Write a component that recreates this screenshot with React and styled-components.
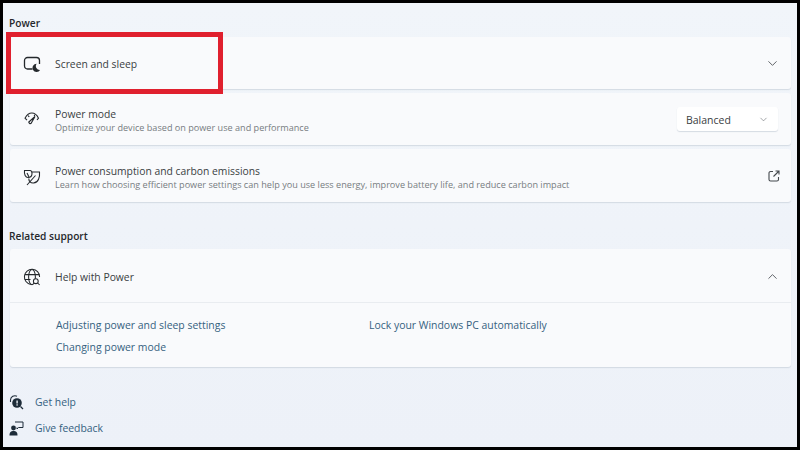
import React from 'react'
import styled, { createGlobalStyle } from 'styled-components'
import { ChevronDown, ChevronUp } from 'lucide-react'

const Global = createGlobalStyle`
    html, body {
        margin: 0;
        padding: 0;
        background: #000;
    }
    * {
        box-sizing: border-box;
    }
`

const Page = styled.div`
    position: relative;
    width: 800px;
    height: 450px;
    overflow: hidden;
    border: 3px solid #000;
    padding: 0 6px 0 7px;
    background: linear-gradient(180deg, #f1f5fa 0%, #edf1f8 100%);
    font-family: "Open Sans", "Noto Sans", sans-serif;
    color: #2b2f33;
`

const SectionTitle = styled.div`
    height: 15px;
    line-height: 15px;
    font-size: 10.2px;
    font-weight: 600;
    color: #25282c;
    margin-left: -1px;
    margin-top: ${props => props.top}px;
    margin-bottom: ${props => props.bottom}px;
`

const Stack = styled.div`
    display: flex;
    flex-direction: column;
    gap: 4px;
`

const Card = styled.div`
    background: #f9fafc;
    border-radius: 3px;
    box-shadow: 0 1px 1px rgba(190, 198, 210, 0.55);
`

const Row = styled(Card)`
    display: flex;
    align-items: center;
    height: ${props => props.h || 52}px;
    padding: 0 11px 0 12px;
`

const IconBox = styled.div`
    width: 20px;
    height: 20px;
    flex: none;
    margin: 2px 13px 0 0;
    display: flex;
    align-items: center;
    justify-content: center;
    color: #24282c;
`

const Body = styled.div`
    flex: 1;
    min-width: 0;
    padding-top: ${props => props.top}px;
`

const Title = styled.div`
    font-size: 10.35px;
    line-height: 13px;
    color: #3a3e42;
`

const Sub = styled.div`
    font-size: 9.12px;
    line-height: 13px;
    color: #777c81;
`

const Trailing = styled.div`
    display: flex;
    align-items: center;
    padding-top: 1px;
    color: #4a4e53;
`

const Select = styled.div`
    width: 101px;
    height: 24px;
    margin-right: 2px;
    padding: 1px 9px 0;
    display: flex;
    align-items: center;
    justify-content: space-between;
    background: #fff;
    border-radius: 3px;
    box-shadow: 0 1px 1px rgba(190, 198, 210, 0.6);
    font-size: 10.5px;
    color: #3a3e42;
`

const Panel = styled(Card)`
    height: 118px;
`

const PanelHead = styled.div`
    display: flex;
    align-items: center;
    height: 54px;
    padding: 0 11px 0 12px;
    border-bottom: 1px solid #e9ecf0;
`

const LinkGrid = styled.div`
    display: grid;
    grid-template-columns: 313px 1fr;
    row-gap: 9px;
    padding: 16px 0 0 46px;
`

const SupportLink = styled.div`
    font-size: 10.45px;
    line-height: 13px;
    color: #35617f;
`

const Footer = styled.div`
    display: flex;
    flex-direction: column;
    gap: 10px;
    margin-top: 27px;
`

const FooterItem = styled.div`
    display: flex;
    align-items: center;
    gap: 11px;
    height: 16px;
    margin-left: -1px;
    font-size: 10.4px;
    color: #35617f;
`

const FooterIcon = styled.div`
    width: 15px;
    height: 16px;
    display: flex;
    align-items: center;
    justify-content: center;
`

const Highlight = styled.div`
    position: absolute;
    left: 3px;
    top: 29px;
    width: 217px;
    height: 62px;
    border: 5px solid #e0202e;
`

const ScreenIcon = () => (
    <svg width="18" height="18" viewBox="0 0 18 18" fill="none" stroke="currentColor" strokeWidth="1.3">
        <path d="M9.5 14H4.5A3 3 0 0 1 1.5 11V5.5A3 3 0 0 1 4.5 2.5H13.5A3 3 0 0 1 16.5 5.5V9" />
        <path d="M13.6 8.8a4.1 4.1 0 1 0 3.5 6.3a4 4 0 0 1 -3.5 -6.3z" fill="currentColor" stroke="none" />
    </svg>
)

const GaugeIcon = () => (
    <svg width="18" height="18" viewBox="0 0 18 18" fill="none" stroke="currentColor" strokeWidth="1.1">
        <path d="M4 9.2L2 7.2C4 3.5 6.5 2 8.8 2S13.8 3.5 15.5 7.2L14 9" />
        <path d="M5.2 4.6L6.2 6M11.8 3.8L11.2 5" />
        <path d="M12 5.5L8.2 12.2A1.5 1.5 0 0 1 5.8 11z" strokeWidth="1.2" />
    </svg>
)

const LeafIcon = () => (
    <svg width="18" height="18" viewBox="0 0 18 18" fill="none" stroke="currentColor" strokeWidth="1.1">
        <path d="M1.5 2.5H7C8.5 2.5 9 4 9 5.5C9 8 7.5 9.5 5 9.5C2.5 9.5 1 6.5 1.5 2.5z" />
        <path d="M9 4H16.5C17 9 15.5 14.5 10.5 15C7.5 15.2 5.8 13.5 5.8 10.5" />
        <path d="M4 17L12.5 7.5M4 5L6 9" />
    </svg>
)

const GlobeIcon = () => (
    <svg width="18" height="18" viewBox="0 0 18 18" fill="none" stroke="currentColor" strokeWidth="1.05">
        <path d="M7.8 16.4A7.6 7.6 0 1 1 16.6 9" />
        <ellipse cx="9" cy="9" rx="3.4" ry="7.6" />
        <path d="M1.8 6.6H16.2M1.8 11.4H7.5" />
        <circle cx="12.8" cy="13.2" r="2.4" fill="#f9fafc" />
        <path d="M14.6 15L16.6 17" />
    </svg>
)

const ExternalIcon = () => (
    <svg width="12" height="12" viewBox="0 0 12 12" fill="none" stroke="#44484d" strokeWidth="1.1">
        <path d="M5 1.5H2.6A1.6 1.6 0 0 0 1 3.1V9.4A1.6 1.6 0 0 0 2.6 11H8.9A1.6 1.6 0 0 0 10.5 9.4V7" />
        <path d="M5.5 6.5L11 1M7.5 1H11V4.5" />
    </svg>
)

const HelpIcon = () => (
    <svg width="15" height="15" viewBox="0 0 15 15">
        <path d="M1.5 7V5A4.5 4.5 0 0 1 8 1.2" fill="none" stroke="#1d2b38" strokeWidth="1.1" />
        <circle cx="8" cy="8" r="4.8" fill="#1d2b38" />
        <path d="M11.5 11.5L14 14" stroke="#1d2b38" strokeWidth="1.2" />
        <rect x="7.4" y="5.5" width="1.4" height="3" fill="#e8edf3" />
        <rect x="7.4" y="9.3" width="1.4" height="1.3" fill="#e8edf3" />
    </svg>
)

const FeedbackIcon = () => (
    <svg width="15" height="15" viewBox="0 0 15 15">
        <circle cx="4.5" cy="7" r="2.4" fill="#1d2b38" />
        <path d="M0.5 14.5C0.5 11 2 10 4.5 10S8.5 11 8.5 14.5z" fill="#1d2b38" />
        <path d="M6 1H14V6.5H9.5L8 8V6.5" fill="none" stroke="#1d2b38" strokeWidth="1" />
    </svg>
)

const App = () => (
    <Page>
        <Global />
        <SectionTitle top={13} bottom={6}>Power</SectionTitle>
        <Stack>
            <Row>
                <IconBox><ScreenIcon /></IconBox>
                <Body top={3}><Title>Screen and sleep</Title></Body>
                <Trailing><ChevronDown size={15} strokeWidth={1.4} /></Trailing>
            </Row>
            <Row>
                <IconBox><GaugeIcon /></IconBox>
                <Body top={4}>
                    <Title>Power mode</Title>
                    <Sub>Optimize your device based on power use and performance</Sub>
                </Body>
                <Select>
                    Balanced
                    <ChevronDown size={11} strokeWidth={1.3} color="#666a6f" />
                </Select>
            </Row>
            <Row h={53}>
                <IconBox><LeafIcon /></IconBox>
                <Body top={4}>
                    <Title>Power consumption and carbon emissions</Title>
                    <Sub>Learn how choosing efficient power settings can help you use less energy, improve battery life, and reduce carbon impact</Sub>
                </Body>
                <Trailing><ExternalIcon /></Trailing>
            </Row>
        </Stack>
        <SectionTitle top={27} bottom={5}>Related support</SectionTitle>
        <Panel>
            <PanelHead>
                <IconBox><GlobeIcon /></IconBox>
                <Body top={3}><Title>Help with Power</Title></Body>
                <Trailing><ChevronUp size={15} strokeWidth={1.4} /></Trailing>
            </PanelHead>
            <LinkGrid>
                <SupportLink>Adjusting power and sleep settings</SupportLink>
                <SupportLink>Lock your Windows PC automatically</SupportLink>
                <SupportLink>Changing power mode</SupportLink>
            </LinkGrid>
        </Panel>
        <Footer>
            <FooterItem><FooterIcon><HelpIcon /></FooterIcon>Get help</FooterItem>
            <FooterItem><FooterIcon><FeedbackIcon /></FooterIcon>Give feedback</FooterItem>
        </Footer>
        <Highlight />
    </Page>
)

export default App
